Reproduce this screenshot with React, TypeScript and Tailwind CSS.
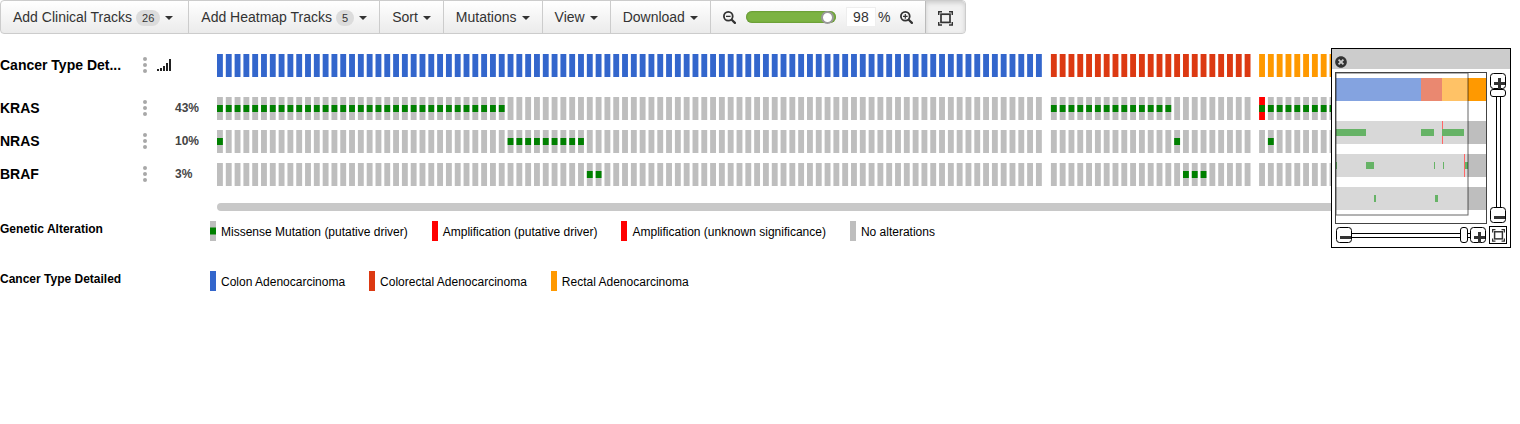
import type { ReactNode } from "react";
import { FaTimesCircle } from "react-icons/fa";

const BLUE = "#3366cc";
const RED = "#dc3912";
const ORANGE = "#ff9900";
const GRAY = "#bebebe";
const GREEN = "#008000";
const AMP = "#ff0000";

const PITCH = 8.806;
const BAR = 5.87;

type Group = { x: number; count: number; color: string };
const groups: Group[] = [
  { x: 0, count: 94, color: BLUE },
  { x: 833.9, count: 23, color: RED },
  { x: 1042.1, count: 9, color: ORANGE },
];

type Gene = { name: string; pct: string; hits: [number, number][][]; y: number };
const genes: Gene[] = [
  { name: "KRAS", pct: "43%", y: 43, hits: [[[0, 32]], [[0, 13]], [[0, 8]]] },
  { name: "NRAS", pct: "10%", y: 76, hits: [[[0, 0], [33, 41]], [[14, 14]], [[1, 1]]] },
  { name: "BRAF", pct: "3%", y: 109, hits: [[[42, 43]], [[15, 17]], []] },
];

function OncoGrid() {
  return (
    <svg width="1114" height="132" className="block" role="img" aria-label="Alterations by sample">
      {groups.map((g, gi) =>
        Array.from({ length: g.count }, (_, i) => {
          const x = g.x + i * PITCH;
          return (
            <g key={`${gi}-${i}`}>
              <rect x={x} y={0} width={BAR} height={23} fill={g.color} />
              {genes.map((gene) => (
                <g key={gene.name}>
                  <rect
                    x={x}
                    y={gene.y}
                    width={BAR}
                    height={23}
                    fill={gi === 2 && i === 0 && gene.name === "KRAS" ? AMP : GRAY}
                  />
                  {gene.hits[gi].some(([a, b]) => i >= a && i <= b) && (
                    <rect x={x} y={gene.y + 8} width={BAR} height={7} fill={GREEN} />
                  )}
                </g>
              ))}
            </g>
          );
        }),
      )}
    </svg>
  );
}

function Caret() {
  return (
    <svg width="8" height="4" viewBox="0 0 8 4" className="mt-px ml-[5px] block" aria-hidden="true">
      <path d="M0 0H8L4 4Z" fill="#333" />
    </svg>
  );
}

function MenuButton({ label, count, wide }: { label: string; count?: number; wide?: boolean }) {
  return (
    <button
      type="button"
      className={`flex items-center border-r border-[#ccc] pl-[12px] whitespace-nowrap ${wide ? "pr-[15px]" : "pr-[12px]"}`}
    >
      {label}
      {count !== undefined && (
        <span className="mt-[2px] ml-[4px] rounded-full bg-[#dcdcdc] px-[6px] text-[11px] leading-4">{count}</span>
      )}
      <Caret />
    </button>
  );
}

function Magnifier({ plus }: { plus?: boolean }) {
  return (
    <svg width="13" height="13" viewBox="0 0 13 13" fill="none" stroke="#333" className="block" aria-hidden="true">
      <circle cx="5.3" cy="5.3" r="4.4" strokeWidth="1.8" />
      <path d="M8.7 8.7L11.9 11.9" strokeWidth="2.2" strokeLinecap="round" />
      <path d={plus ? "M3 5.4H7.6M5.3 3.1V7.7" : "M3 5.4H7.6"} strokeWidth="1.2" />
    </svg>
  );
}

function FitIcon({ size }: { size: number }) {
  return (
    <svg width={size} height={size} viewBox="0 0 15 15" fill="none" stroke="#333" aria-hidden="true">
      <rect x="3" y="3.2" width="9" height="8.2" strokeWidth="1.7" />
      <path d="M0.7 4V0.8H4M11 0.8H14.3V4M14.3 11V14H11M4 14H0.7V11" strokeWidth="1.5" />
    </svg>
  );
}

function Toolbar() {
  return (
    <div
      role="toolbar"
      className="flex h-[34px] w-fit overflow-hidden rounded-[4px] border border-[#ccc] bg-linear-to-b from-white to-[#ebebeb] text-[14px] leading-5 text-[#333]"
    >
      <MenuButton label="Add Clinical Tracks" count={26} wide />
      <MenuButton label="Add Heatmap Tracks" count={5} />
      <MenuButton label="Sort" />
      <MenuButton label="Mutations" />
      <MenuButton label="View" />
      <MenuButton label="Download" />
      <div className="flex items-center border-r border-[#bbb] px-[12px]">
        <button type="button" aria-label="Zoom out">
          <Magnifier />
        </button>
        <input
          type="range"
          aria-label="Zoom level"
          defaultValue={98}
          className="ml-[10px] h-3 w-[90px] appearance-none rounded-full bg-[#7cb342] shadow-[inset_0_0_2px_#46701c] [&::-webkit-slider-thumb]:size-[13px] [&::-webkit-slider-thumb]:appearance-none [&::-webkit-slider-thumb]:rounded-full [&::-webkit-slider-thumb]:border-2 [&::-webkit-slider-thumb]:border-[#999] [&::-webkit-slider-thumb]:bg-white"
        />
        <input
          type="text"
          aria-label="Zoom percentage"
          defaultValue="98"
          className="ml-[10px] h-5 w-[30px] border border-[#eee] bg-white text-center"
        />
        <span className="ml-[2px]">%</span>
        <button type="button" aria-label="Zoom in" className="ml-[10px]">
          <Magnifier plus />
        </button>
      </div>
      <button
        type="button"
        aria-label="Fit to screen"
        className="flex w-[39px] items-center justify-center rounded-r-[3px] bg-[#f0f0f0] pt-[3px] shadow-[inset_0_2px_4px_rgba(0,0,0,0.15)]"
      >
        <FitIcon size={15} />
      </button>
    </div>
  );
}

function Dots() {
  return (
    <button type="button" aria-label="Track options" className="flex w-1 flex-col gap-[2px]">
      <span className="size-1 rounded-full bg-[#a8a8a8]" />
      <span className="size-1 rounded-full bg-[#a8a8a8]" />
      <span className="size-1 rounded-full bg-[#a8a8a8]" />
    </button>
  );
}

function TrackRow({ name, children }: { name: string; children?: ReactNode }) {
  return (
    <div className="flex h-[23px] items-center pb-px">
      <span className="w-[143px] text-[14px] leading-5 font-bold">{name}</span>
      <Dots />
      {children}
    </div>
  );
}

function SignalIcon() {
  return (
    <svg width="14" height="12" viewBox="0 0 14 12" fill="#222" className="ml-[10px]" aria-hidden="true">
      <path d="M0 10h2v2H0zM3 9h2v3H3zM6 7h2v5H6zM9 4h2v8H9zM12 0h2v12h-2z" />
    </svg>
  );
}

function Swatch({ color, driver }: { color: string; driver?: boolean }) {
  return (
    <svg width="6" height="20" className="mr-[5px]" aria-hidden="true">
      <rect width="6" height="20" fill={color} />
      {driver && <rect y="6.5" width="6" height="7" fill={GREEN} />}
    </svg>
  );
}

type LegendItem = { label: string; color: string; driver?: boolean };
function Legend({ title, items }: { title: string; items: LegendItem[] }) {
  return (
    <section className="flex h-5 text-[12px]">
      <h2 className="w-[210px] leading-4 font-bold">{title}</h2>
      <ul className="flex gap-6">
        {items.map((it) => (
          <li key={it.label} className="flex leading-[22px] whitespace-nowrap">
            <Swatch color={it.color} driver={it.driver} />
            {it.label}
          </li>
        ))}
      </ul>
    </section>
  );
}

function MiniMap() {
  return (
    <svg width="152" height="152" className="block" role="img" aria-label="Overview">
      <g>
        <rect x="1" y="6" width="85" height="23" fill={BLUE} />
        <rect x="86" y="6" width="21" height="23" fill={RED} />
        <rect x="107" y="6" width="44" height="23" fill={ORANGE} />
        <path d="M1 49H151V72H1zM1 82H151V105H1zM1 115H151V138H1z" fill={GRAY} />
        <path d="M107 49h1v23h-1zM129 82h1v23h-1z" fill={AMP} />
        <path
          d="M1 57h30v7H1zM86 57h13v7H86zM107 57h22v7h-22zM1 90h1v7H1zM31 90h8v7h-8zM99 90h1v7h-1zM108 90h1v7h-1zM130 90h3v7h-3zM39 123h2v7h-2zM100 123h3v7h-3z"
          fill={GREEN}
        />
      </g>
      <rect x="1" y="1" width="132" height="142" fill="white" fillOpacity="0.4" />
      <rect x="1" y="1" width="132" height="142" fill="none" stroke="black" strokeOpacity="0.6" />
      <rect x="0.5" y="0.5" width="151" height="151" fill="none" stroke="#444" />
    </svg>
  );
}

function StepButton({ kind, label }: { kind: "plus" | "minus"; label: string }) {
  return (
    <button type="button" aria-label={label} className="size-4 shrink-0">
      <svg width="16" height="16" className="block" aria-hidden="true">
        <rect x="0.5" y="0.5" width="15" height="15" rx="3" fill="white" stroke="black" />
        <path d={kind === "plus" ? "M4 9h11v3H4zM8 5h3v11H8z" : "M4 9h11v3H4z"} fill="#333" />
      </svg>
    </button>
  );
}

function Overview() {
  return (
    <aside className="absolute top-[48px] right-[9px] h-[200px] w-[180px] border border-black bg-white">
      <header className="flex h-5 items-end bg-[#ccc] pb-px pl-[3px]">
        <button type="button" aria-label="Close" className="rounded-full">
          <FaTimesCircle size={12} color="#333" />
        </button>
      </header>
      <div className="flex justify-between pt-[3px] pr-[4px] pl-[3px]">
        <MiniMap />
        <div className="flex w-4 flex-col items-center py-px">
          <StepButton kind="plus" label="Zoom in vertically" />
          <span className="h-2 w-4 shrink-0 rounded-[3px] border border-black bg-white" />
          <span className="w-[5px] grow border-x border-black" />
          <StepButton kind="minus" label="Zoom out vertically" />
        </div>
      </div>
      <div className="flex items-center pt-[2px] pr-[3px] pl-[4px]">
        <StepButton kind="minus" label="Zoom out horizontally" />
        <span className="h-[5px] grow border-y border-black" />
        <span className="h-4 w-2 rounded-[3px] border border-black bg-white" />
        <span className="h-[5px] w-[2px] border-y border-black" />
        <StepButton kind="plus" label="Zoom in horizontally" />
        <button
          type="button"
          aria-label="Fit overview"
          className="ml-[3px] flex size-[18px] items-center justify-center border border-black"
        >
          <FitIcon size={13} />
        </button>
      </div>
    </aside>
  );
}

export default function App() {
  return (
    <main className="relative bg-white font-['Liberation_Sans',Arial,sans-serif] text-black">
      <Toolbar />
      <div className="flex pt-5 pr-[189px]">
        <div className="flex w-[217px] shrink-0 flex-col">
          <TrackRow name="Cancer Type Det...">
            <SignalIcon />
          </TrackRow>
          <div className="flex flex-col gap-[10px] pt-5">
            {genes.map((g) => (
              <TrackRow key={g.name} name={g.name}>
                <span className="ml-7 text-[12px] leading-4 font-bold text-[#444]">{g.pct}</span>
              </TrackRow>
            ))}
          </div>
        </div>
        <div className="min-w-0 grow overflow-hidden">
          <OncoGrid />
          <div className="mt-[17px] h-2 rounded-l-full bg-[#c8c8c8]" />
        </div>
      </div>
      <div className="flex flex-col gap-[30px] pt-[10px]">
        <Legend
          title="Genetic Alteration"
          items={[
            { label: "Missense Mutation (putative driver)", color: GRAY, driver: true },
            { label: "Amplification (putative driver)", color: AMP },
            { label: "Amplification (unknown significance)", color: AMP },
            { label: "No alterations", color: GRAY },
          ]}
        />
        <Legend
          title="Cancer Type Detailed"
          items={[
            { label: "Colon Adenocarcinoma", color: BLUE },
            { label: "Colorectal Adenocarcinoma", color: RED },
            { label: "Rectal Adenocarcinoma", color: ORANGE },
          ]}
        />
      </div>
      <Overview />
    </main>
  );
}
